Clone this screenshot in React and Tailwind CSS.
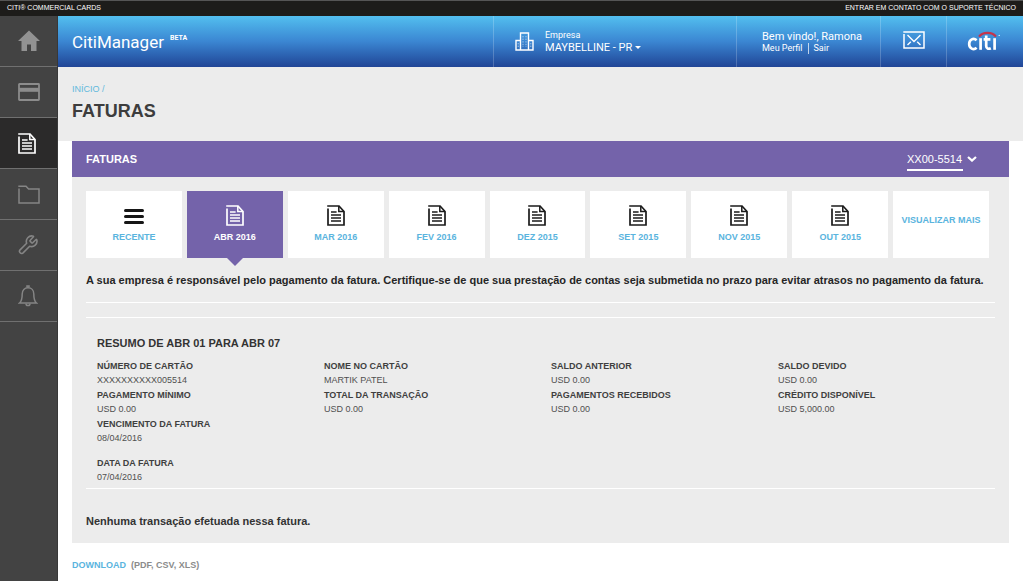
import { useState } from 'react';

const HomeIcon = () => (
  <svg width="22" height="22" viewBox="0 0 22 22" fill="#929292" aria-hidden="true">
    <path d="M11 0.5 L22 11 H18.5 V21 H13 V14.5 H9 V21 H3.5 V11 H0 Z" />
  </svg>
);

const CardIcon = () => (
  <svg width="22" height="18" viewBox="0 0 22 18" aria-hidden="true">
    <rect x="1" y="1" width="20" height="16" rx="0.5" fill="none" stroke="#8c8c8c" strokeWidth="1.8" />
    <rect x="1" y="4.8" width="20" height="4" fill="#8c8c8c" />
  </svg>
);

const DocIcon = () => (
  <svg width="18" height="21" viewBox="0 0 18 21" fill="none" stroke="currentColor" strokeWidth="1.7" aria-hidden="true">
    <path d="M0.2 1 H12 L17 6.5 V20 H1 V3.4" />
    <path d="M11.8 1 V6.6 H17" strokeWidth="1.5" />
    <path d="M4 6.9 H9.6 M4 10 H14 M4 13 H14 M4 16 H14" strokeWidth="1.5" />
  </svg>
);

const FolderIcon = () => (
  <svg width="22" height="19" viewBox="0 0 22 19" fill="none" stroke="#858585" strokeWidth="1.5" aria-hidden="true">
    <path d="M0.3 1.2 H8 L10.6 4 H21 V18 H1 V3.4" />
  </svg>
);

const WrenchIcon = () => (
  <svg width="20" height="20" viewBox="0 0 24 24" fill="none" stroke="#858585" strokeWidth="1.9" strokeLinejoin="round" aria-hidden="true">
    <path d="M14.7 6.3a1 1 0 0 0 0 1.4l1.6 1.6a1 1 0 0 0 1.4 0l4-3.9a.5.5 0 0 1 .8.2 6.5 6.5 0 0 1-8.5 7.9l-8.2 8.2a2.6 2.6 0 0 1-3.6-3.6l8.2-8.2a6.5 6.5 0 0 1 7.9-8.5.5.5 0 0 1 .2.8z" />
  </svg>
);

const BellIcon = () => (
  <svg width="20" height="22" viewBox="0 0 20 22" fill="none" stroke="#858585" strokeWidth="1.5" aria-hidden="true">
    <path d="M9 2.6 V1 H11 V2.6" />
    <path d="M1.5 18 C4 16 4.2 13 4.2 9 C4.2 5.2 6.6 2.8 10 2.8 C13.4 2.8 15.8 5.2 15.8 9 C15.8 13 16 16 18.5 18 Z" />
    <path d="M8 18.5 C8 21.3 12 21.3 12 18.5" />
  </svg>
);

const BuildingIcon = () => (
  <svg width="19" height="19" viewBox="0 0 19 19" fill="none" stroke="#fff" strokeWidth="1.4" aria-hidden="true">
    <path d="M5.5 18 V1 H13.5 V18 M5.5 8.5 H1 V18 H18 V8.5 H13.5" />
    <path d="M8 4 V15 M11 4 V15 M3.2 11 V16 M15.8 11 V16" strokeWidth="0.8" strokeDasharray="1.4 1.2" opacity="0.7" />
  </svg>
);

const MailIcon = () => (
  <svg width="22" height="18" viewBox="0 0 22 18" fill="none" stroke="#fff" strokeWidth="1.5" aria-hidden="true">
    <path d="M0.3 1 H21 V17 H1 V3" />
    <path d="M4.5 4 L11 10.4 L17.5 4 M4.5 14 L7.8 10.8 M17.5 14 L14.2 10.8" strokeWidth="1.4" />
  </svg>
);

const CitiLogo = () => (
  <svg width="34" height="22" viewBox="0 0 34 22" fill="none" role="img" aria-label="citi">
    <path d="M12 5.6 C16 0.6 25 0.6 29 5.6" stroke="#c4344c" strokeWidth="2.2" />
    <g stroke="#fff" strokeWidth="2.7">
      <path d="M9.6 9.2 C6.6 6.6 2.2 8.4 2.2 13 C2.2 17.6 6.6 19.4 9.6 16.8" />
      <path d="M13.6 7.2 V18.8" />
      <path d="M19.2 4.6 V15 C19.2 17.6 21.4 18.4 23.8 17.2 M16.6 8.4 H23.4" />
      <path d="M27.6 7.2 V18.8" />
    </g>
    <circle cx="32.2" cy="4.4" r="0.6" fill="#fff" />
  </svg>
);

const navItems = [
  { label: 'Início', icon: HomeIcon },
  { label: 'Cartões', icon: CardIcon },
  { label: 'Faturas', icon: DocIcon },
  { label: 'Arquivos', icon: FolderIcon },
  { label: 'Ferramentas', icon: WrenchIcon },
  { label: 'Alertas', icon: BellIcon }
];

const months = ['ABR 2016', 'MAR 2016', 'FEV 2016', 'DEZ 2015', 'SET 2015', 'NOV 2015', 'OUT 2015'];

const summary = [
  { label: 'NÚMERO DE CARTÃO', value: 'XXXXXXXXXX005514' },
  { label: 'NOME NO CARTÃO', value: 'MARTIK PATEL' },
  { label: 'SALDO ANTERIOR', value: 'USD 0.00' },
  { label: 'SALDO DEVIDO', value: 'USD 0.00' },
  { label: 'PAGAMENTO MÍNIMO', value: 'USD 0.00' },
  { label: 'TOTAL DA TRANSAÇÃO', value: 'USD 0.00' },
  { label: 'PAGAMENTOS RECEBIDOS', value: 'USD 0.00' },
  { label: 'CRÉDITO DISPONÍVEL', value: 'USD 5,000.00' },
  { label: 'VENCIMENTO DA FATURA', value: '08/04/2016' }
];

const Field = ({ label, value }) => (
  <div className="pt-px pb-px text-[9px]">
    <dt className="leading-[13px] font-bold text-[#3f3f3f]">{label}</dt>
    <dd className="leading-[14px] text-[#505050]">{value}</dd>
  </div>
);

const Header = () => (
  <header className="flex h-[51px] text-white bg-linear-to-b from-[#53bfef] via-[#3b86d2] to-[#214596] font-[Roboto,sans-serif]">
    <div className="flex-1 flex items-center pl-[14px]">
      <span className="text-[17px] leading-5">CitiManager</span>
      <sup className="ml-[6px] text-[7px] font-bold">BETA</sup>
    </div>
    <div className="w-[243px] flex items-center border-l border-white/20 pl-[21px]">
      <BuildingIcon />
      <div className="ml-[11px]">
        <p className="text-[9px] leading-[11px]">Empresa</p>
        <button className="flex items-center gap-[3px] text-[11px] leading-[13px]">
          MAYBELLINE - PR
          <span className="border-x-[3px] border-t-[3px] border-x-transparent border-t-white" />
        </button>
      </div>
    </div>
    <div className="w-36 flex flex-col justify-center border-l border-white/20 pl-[25px]">
      <p className="text-[11px] leading-[13px]">Bem vindo!, Ramona</p>
      <p className="flex text-[9px] leading-[11px]">
        <a href="#perfil" className="pr-1.5">Meu Perfil</a>
        <a href="#sair" className="border-l border-white/70 pl-1">Sair</a>
      </p>
    </div>
    <button aria-label="Mensagens" className="w-[66px] flex items-center justify-center border-l border-white/20 pb-1">
      <MailIcon />
    </button>
    <div className="w-[77px] flex items-center border-l border-white/20 pl-5">
      <CitiLogo />
    </div>
  </header>
);

const App = () => {
  const [active, setActive] = useState('ABR 2016');
  const [account, setAccount] = useState('XX00-5514');

  return (
    <div className="min-h-screen flex flex-col bg-white font-['Liberation_Sans',Arial,sans-serif]">
      <div className="h-4 flex items-center justify-between px-[7px] border-t border-[#555] bg-[#1d1c1a] text-[7px] text-white">
        <span>CITI® COMMERCIAL CARDS</span>
        <a href="#suporte">ENTRAR EM CONTATO COM O SUPORTE TÉCNICO</a>
      </div>

      <div className="flex-1 flex">
        <nav className="w-[58px] shrink-0 bg-[#434343] border-r border-[#383838]">
          {navItems.map(({ label, icon: Icon }) => (
            <a key={label} href="#nav" aria-label={label}
              className={`h-[51px] flex items-center pl-[18px] border-b border-[#707070] text-white ${label === 'Faturas' ? 'bg-[#2b2a2a]' : ''}`}>
              <Icon />
            </a>
          ))}
        </nav>

        <div className="flex-1 min-w-0">
          <Header />

          <div className="h-[74px] bg-[#ececec] pl-[14px] pt-4">
            <p className="text-[9px] leading-3 text-[#62b9dc]"><a href="#inicio">INÍCIO</a> /</p>
            <h1 className="mt-1 text-[18px] leading-6 font-bold text-[#3d3d3d]">FATURAS</h1>
          </div>

          <main className="mx-[14px]">
            <div className="h-9 flex items-center justify-between pl-[14px] pr-8 bg-[#7463aa] text-white text-[11px]">
              <h2 className="font-bold">FATURAS</h2>
              <label className="flex items-center gap-1">
                <select aria-label="Conta" value={account} onChange={e => setAccount(e.target.value)}
                  className="appearance-none w-14 h-5 mt-1 pb-1 border-b-2 border-white">
                  <option>XX00-5514</option>
                </select>
                <svg width="10" height="6" viewBox="0 0 10 6" fill="none" stroke="#fff" strokeWidth="2.2" aria-hidden="true">
                  <path d="M1 1 L5 4.6 L9 1" />
                </svg>
              </label>
            </div>

            <section className="bg-[#ececec] p-[14px]">
              <div className="grid grid-cols-9 gap-[5px] mr-1.5 text-[9px] font-bold text-[#5ab4de]">
                <button onClick={() => setActive('RECENTE')} className="h-[67px] flex flex-col items-center bg-white pt-[18px]">
                  <span className="h-[22px] flex flex-col justify-start gap-[3px]">
                    <span className="w-5 h-[3px] bg-[#161616] rounded-full" />
                    <span className="w-5 h-[3px] bg-[#161616] rounded-full" />
                    <span className="w-5 h-[3px] bg-[#161616] rounded-full" />
                  </span>
                  <span className="leading-3">RECENTE</span>
                </button>
                {months.map(month => (
                  <button key={month} onClick={() => setActive(month)}
                    className={`relative h-[67px] flex flex-col items-center pt-[14px] ${active === month ? 'bg-[#7463aa] text-white' : 'bg-white'}`}>
                    <span className={`h-[26px] ${active === month ? '' : 'text-[#1b1b1b]'}`}><DocIcon /></span>
                    <span className="leading-3">{month}</span>
                    {active === month && (
                      <span className="absolute top-full left-1/2 -translate-x-1/2 border-x-8 border-t-8 border-x-transparent border-t-[#7463aa]" />
                    )}
                  </button>
                ))}
                <button className="h-[67px] bg-white pb-2 whitespace-nowrap">VISUALIZAR MAIS</button>
              </div>

              <p className="mt-[14px] text-[11px] leading-4 font-bold text-[#262626]">
                A sua empresa é responsável pelo pagamento da fatura. Certifique-se de que sua prestação de contas seja submetida no prazo para evitar atrasos no pagamento da fatura.
              </p>

              <div className="mt-[14px] h-4 border-y border-white" />

              <div className="pl-[11px] pt-4 pb-[3px] border-b border-white">
                <h3 className="text-[11px] leading-[18px] font-bold text-[#333]">RESUMO DE ABR 01 PARA ABR 07</h3>
                <dl className="mt-[7px] -mr-2.5 grid grid-cols-4">
                  {summary.map(item => <Field key={item.label} {...item} />)}
                </dl>
                <dl className="mt-2.5">
                  <Field label="DATA DA FATURA" value="07/04/2016" />
                </dl>
              </div>

              <p className="mt-6 text-[11px] leading-4 font-bold text-[#333]">Nenhuma transação efetuada nessa fatura.</p>
            </section>

            <p className="mt-4 flex gap-[5px] text-[9px] leading-3 font-bold text-[#8b8b8b]">
              <a href="#download" className="text-[#5ab4de]">DOWNLOAD</a>
              <span>(PDF, CSV, XLS)</span>
            </p>
          </main>
        </div>
      </div>
    </div>
  );
};

export default App;
